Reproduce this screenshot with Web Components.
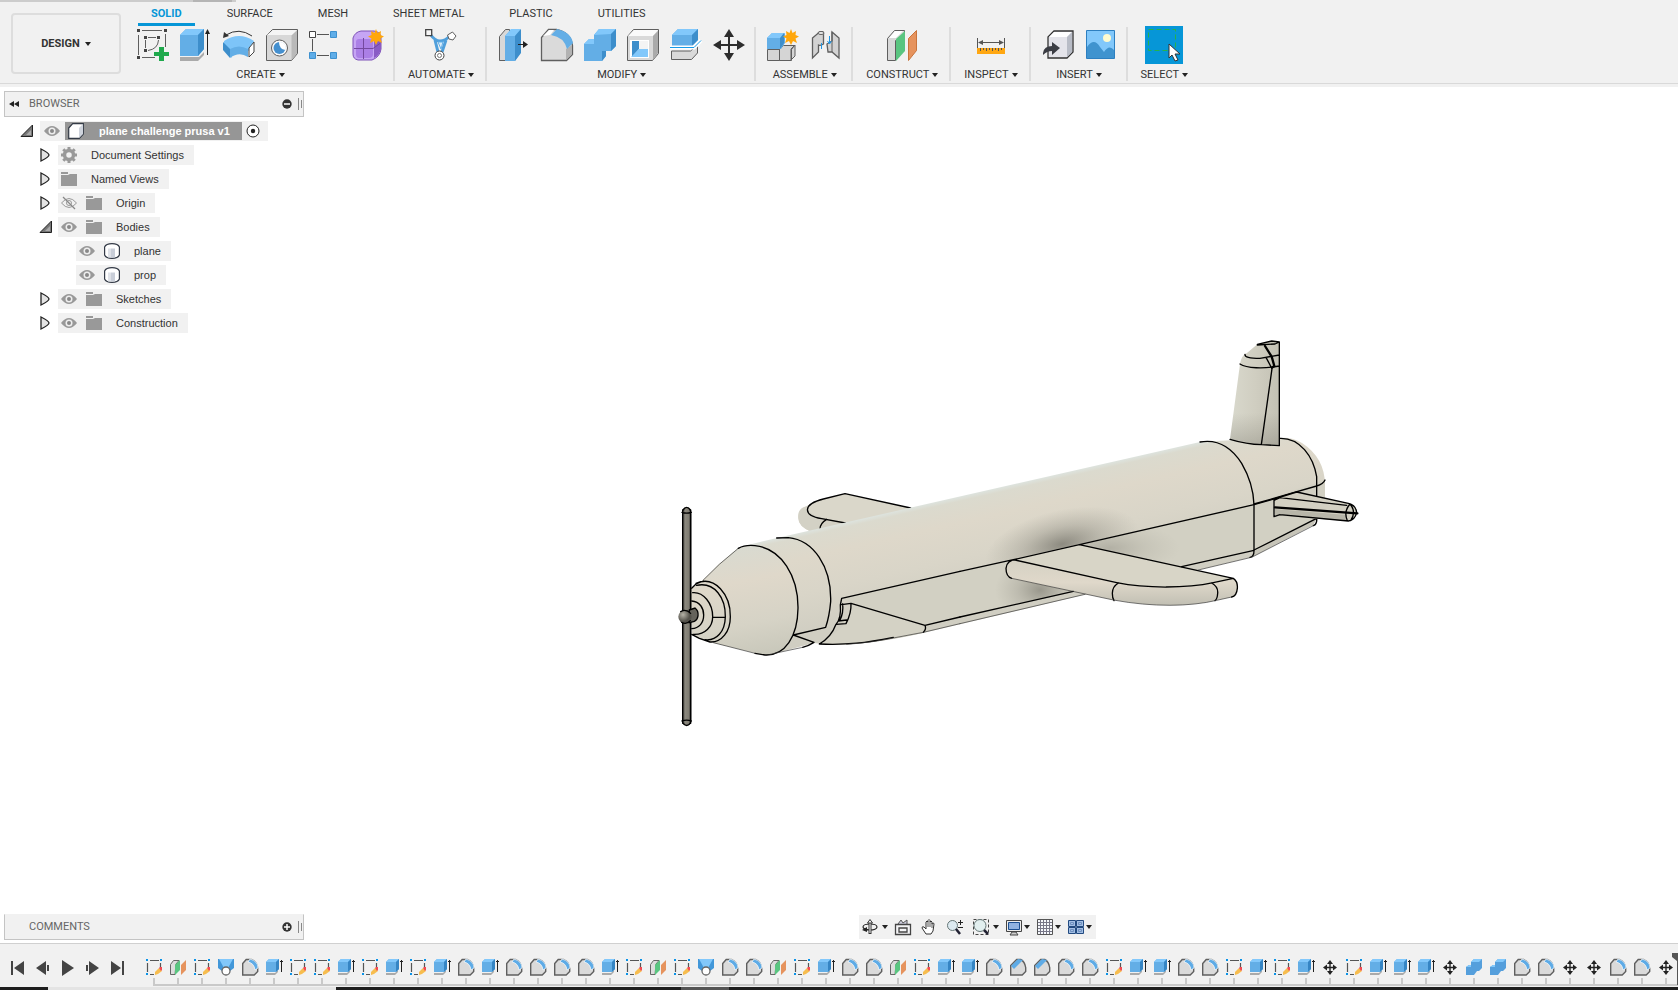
<!DOCTYPE html>
<html lang="en">
<head>
<meta charset="utf-8">
<title>plane challenge prusa v1</title>
<style>
html,body{margin:0;height:100%}
body{font:11px/16px Roboto,"Liberation Sans",sans-serif;color:#333;background:#fff;overflow:hidden}
</style>
</head>
<body>
<cad-app></cad-app>
<script>
const BASE = `*{box-sizing:border-box}button{font:inherit;color:inherit;background:none;border:0;padding:0;margin:0;display:flex;align-items:center;justify-content:center}svg{display:block}`;
const define = (name, render) => customElements.define(name, class extends HTMLElement {
  connectedCallback() {
    if (this.shadowRoot) return;
    const t = document.createElement('template');
    t.innerHTML = `<style>${BASE}</style>` + render(this);
    this.attachShadow({mode: 'open'}).append(t.content.cloneNode(true));
  }
});

/* Icon artwork: [width, height, markup] */
const G = '#5f5f5f';
const ICONS = {
  sketch: [32,32,`<path d="M1.500 6v20M5 1.500h20M28.500 5v13M5 28.500h13" stroke="${G}" fill="none"/><g fill="#444"><path d="M0 0h3v3H0zM27 0h3v3h-3zM0 27h3v3H0zM7 7h3v3H7zM20 7h3v3h-3zM7 20h3v3H7z"/></g><path d="M11 8.500h8M8.500 11v8M21.500 11Q21 20 11 21.500" stroke="${G}" fill="none"/><path d="M22 18h5v5h5v4h-5v5h-5v-5h-5v-4h5z" fill="#1fa94c"/>`],
  extrude: [32,32,`<path d="M0 28h19l5-5v3l-6 6H0z" fill="#aaa"/><path d="M0 6l6-6h18v20l-6 7H0z" fill="#63aee6"/><path d="M0 6l6-6h18l-6 6z" fill="#82c8fb"/><path d="M18 6l6-6v20l-6 7z" fill="#3d8ecb"/><path d="M27.500 4v22" stroke="#222"/><path d="M25 5l2.500-5L30 5z" fill="#222"/>`],
  revolve: [32,32,`<path d="M1 12Q16 2 31 12l-5 10q-9-5-18 0l1 7-8-8z" fill="#7dc4f8"/><path d="M0 13l7 7v9l-7-8z" fill="#3d8ecb"/><path d="M7 20q9-5 18 0v8q-9-6-18 1z" fill="#63aee6"/><path d="M26 19l5-6v10l-5 5z" fill="#fff" stroke="#444"/><path d="M3 6Q16-2 29 7" fill="none" stroke="#333"/><path d="M0 9l1-6 5 4z" fill="#333"/>`],
  hole: [32,32,`<path d="M.500 6.500l6-6h25v24l-6 7H.500z" fill="#d8d8d8" stroke="${G}"/><path d="M1 6l6-5h24l-5 5z" fill="#f5f5f5"/><path d="M25.500 6.500l5.500-5v23l-5.500 6.500z" fill="#b9b9b9"/><circle cx="13.500" cy="19" r="8" fill="#fafafa" stroke="${G}"/><circle cx="13.500" cy="19" r="6" fill="#4590cf"/><path d="M13 13q0 7 6.500 8a6 6 0 0 0-6.500-8z" fill="#fff"/>`],
  pattern: [32,32,`<path d="M8 5.500h12M3.500 10v12M8 26.500h12" stroke="#555"/><path d="M.500 2.500h6v6h-6z" fill="#fff" stroke="#444"/><path d="M21.500 2.500h6v6h-6zM.500 23.500h6v6h-6zM21.500 23.500h6v6h-6z" fill="#5fadE8" stroke="#3e91cf"/>`],
  form: [32,32,`<path d="M1 9q2-6 8-7h13q7 1 7 7v11q-1 8-9 11H6q-5-1-5-6z" fill="#c6a5f4" stroke="#7f53b8"/><path d="M22 10l7-4v14q-2 7-7 9z" fill="#8a5cc5"/><path d="M4 13q0-3 3-3h10q4 0 4 3v12q0 4-4 4H7q-3 0-3-4z" fill="#ab7fe6"/><path d="M11.500 9v21M2 19.500h19l7-5" stroke="#74499f" fill="none"/><path d="M24 0l1.500 4L29 2l-.500 4L32 7.500 28.500 9.500 30 14l-4-2-2 4-2-4-4 2 1.500-4.500L16 7.500 19.500 6 19 2l3.500 2z" fill="#ffa70c"/>`],
  automate: [32,32,`<path d="M5 5q5 7 10 7t10-5M10 11l3 12M21 11l-4 12" stroke="#4f9fdb" stroke-width="3" fill="none"/><path d="M13 13h5l-2 7z" fill="#d7ecfb" stroke="#5fadE8"/><path d="M.700.700h6v6h-6z" fill="#f6f6f6" stroke="#444" stroke-width="1.300"/><path d="M22.500 6l5-3 3.500 4-3 4-4-1z" fill="#fff" stroke="${G}"/><circle cx="14.500" cy="26.500" r="4.500" fill="#fff" stroke="#444"/><circle cx="14.500" cy="26.500" r="2" fill="none" stroke="#777"/>`],
  presspull: [32,32,`<path d="M1.500 7.500l6-7h4v31h-10z" fill="#d8d8d8" stroke="${G}"/><path d="M7 7l6-6.500h9v24L17 32H7z" fill="#63aee6"/><path d="M7 7l6-7h10l-6 7z" fill="#82c8fb"/><path d="M17 7l6-7v24l-6 8z" fill="#3d8ecb"/><path d="M20 15.500h7" stroke="#222"/><path d="M25 12l5 3.500-5 3.500z" fill="#222"/>`],
  fillet: [32,32,`<path d="M.500 8.500l7-8h8q14 3 16 16v9l-6 6H.500z" fill="#dadada" stroke="${G}" stroke-width="1.300"/><path d="M2 7l6-6h5L9 6z" fill="#fff"/><path d="M25 20l6-4v9l-6 6z" fill="#b2b2b2"/><path d="M10 6l6-6q14 3 16 14l-6 6Q23 8 10 6z" fill="#63aee6"/>`],
  combine: [32,32,`<path d="M10 6l5-6h17v17l-5 5h-5v5l-4 5H0V15l5-5h5z" fill="#63aee6"/><path d="M10 6l5-6h17l-5 5z" fill="#82c8fb"/><path d="M0 15l5-5h5v5z" fill="#82c8fb"/><path d="M27 5l5-5v17l-5 5zM18 22h4v5l-4 5z" fill="#3d8ecb"/>`],
  shell: [32,32,`<path d="M.500 7.500l6-7h25v24l-6 7H.500z" fill="#d9d9d9" stroke="${G}"/><path d="M1 7l6-6h24l-5 6z" fill="#fafafa"/><path d="M26 7l5-5v22l-5 7z" fill="#aaa"/><path d="M3 11h19v18H3z" fill="#fff"/><path d="M5 12h7v8l-7 8z" fill="#3d8ecb"/><path d="M4 28l8-8h9v8z" fill="#82c8fb"/><path d="M12 12h9v8h-9z" fill="#f4f4f4"/>`],
  split: [32,32,`<path d="M1.500 22h19l7-6v8l-6 6.500h-20z" fill="#d9d9d9" stroke="${G}"/><path d="M2 6l6-6h20v11l-6 6H2z" fill="#63aee6"/><path d="M2 6l6-6h20l-6 6z" fill="#82c8fb"/><path d="M22 6l6-6v11l-6 6z" fill="#3d8ecb"/><path d="M0 18.500h24l7-7" stroke="#fff" stroke-width="4" fill="none"/><path d="M0 18.500h24l7-7" stroke="#189be8" fill="none"/>`],
  move: [32,32,`<path d="M16 5v22M5 16h22" stroke="#2d2d2d" stroke-width="2"/><path d="M16 0l5 8H11zM16 32l-5-8h10zM0 16l8-5v10zM32 16l-8 5V11z" fill="#2d2d2d"/>`],
  component: [32,32,`<path d="M.500 20.500h12v11H.500zM12.500 20.500l4-4h11l-3 4v11h-12zM24 20l4-4v11l-4 4z" fill="#d5d5d5" stroke="${G}"/><path d="M0 9l5-5h13v10l-4 6H0z" fill="#63aee6"/><path d="M0 9l5-5h13l-4 5z" fill="#82c8fb"/><path d="M13 9l4-5v10l-4 6z" fill="#3d8ecb"/><path d="M24 0l1.500 4L29 2l-.500 4L32 7.500 28.500 9.500 30 14l-4-2-2 4-2-4-4 2 1.500-4.500L16 7.500 19.500 6 19 2l3.500 2z" fill="#ffa70c"/>`],
  joint: [32,32,`<path d="M2.500 9l7-6q4-1 4 1v11q-3 2-5 1v7l-6 6z" fill="#d3d3d3" stroke="${G}" stroke-width="1.300"/><ellipse cx="11" cy="4" rx="3" ry="1.500" fill="#eee" stroke="${G}"/><path d="M17 15l5-3V3l7 6v20l-7-6h-4z" fill="#d3d3d3" stroke="${G}" stroke-width="1.300"/><path d="M22 3v20" stroke="${G}"/><path d="M11.500 14v6M19.500 7v7m-2-2l2 3 2-3" stroke="#2196e4" fill="none"/>`],
  construct: [32,32,`<path d="M1.500 9.500l7-8h10v3l-9 7v20h-8z" fill="#d8d8d8" stroke="${G}"/><path d="M3 9l6-7h8l-7 7z" fill="#fff"/><path d="M10 10l9-8v20l-9 10z" fill="#59c580"/><path d="M22.500 9.500l8-8v20l-8 10z" fill="#e6935d" stroke="#c9743c"/>`],
  inspect: [32,32,`<path d="M2.500 9v13M29.500 9v13M5 13.500h22" stroke="#555"/><path d="M3 13.500l5-2.500v5zM29 13.500l-5-2.500v5z" fill="#555"/><path d="M2 19h28v6H2z" fill="#ffa712"/><path d="M5.500 19v3m3-3v2m3-2v3m3-3v2m3-2v3m3-3v2m3-2v3m3-3v2" stroke="#555"/>`],
  insert: [32,32,`<path d="M6 8l6-6h19v21l-6 6H6z" fill="#e4e4ea" stroke="#333" stroke-width="1.300"/><path d="M7 8l5-5h18l-5 5z" fill="#fff"/><path d="M25 8l5-5v20l-5 5z" fill="#b8bcc6"/><path d="M1 24q1-7 9-7v-4l8 6-8 7v-4q-5 0-9 4z" fill="#3b3d44"/>`],
  image: [32,32,`<path d="M1.500 1.500h28v28h-28z" fill="#82c8fb" stroke="#2d7fc0"/><path d="M2 18q7-10 13 0l4 5q5-8 10-2v8H2z" fill="#3f93cf"/><circle cx="22" cy="9" r="4" fill="#fffbd0"/>`],
  select: [38,38,`<path d="M0 0h38v38H0z" fill="#0696d7"/><path d="M3.500 3.500h27v21h-27z" fill="none" stroke="#25b34b" stroke-dasharray="5 3"/><path d="M24 18v14l3-3 3 6 3-1-3-6h5z" fill="#fff" stroke="#333"/>`],
  'tl-sketch': [16,17,`<path d="M4 1.500h9M1.500 4v9M14.500 4v5M4 15.500h4" stroke="#555" stroke-width="1.200"/><path d="M0 0h2v2H0zM14 0h2v2h-2zM0 14h2v2H0z" fill="#0a93e8"/><path d="M9 13l4-4 3 3-4 3-3 1z" fill="#f7bd4f"/><path d="M13 9l1-1h2v3l-1 1z" fill="#f34a52"/>`],
  'tl-construct': [16,17,`<path d="M.500 15.500V5.500l3-4H9L6 5l-1 10.500z" fill="#ddd" stroke="#666"/><path d="M5 6l5-5v10l-5 5z" fill="#59c580"/><path d="M11 6l5-5v10l-5 5z" fill="#e6935d"/>`],
  'tl-loft': [16,17,`<path d="M0 0h16v9l-4 3L8 8l-4 4-4-3z" fill="#4297d9"/><path d="M1 0h14l-5 9H6z" fill="#82c8fb"/><circle cx="8" cy="12" r="4" fill="#fff" stroke="#666" stroke-width="1.300"/>`],
  'tl-fillet': [16,17,`<path d="M.700 4.500l3.500-4h5q6 2 6.500 9v3l-3.500 3.500H.700z" fill="#dadada" stroke="${G}" stroke-width="1.400"/><path d="M6 3l2-3q8 2 8 9l-3 2Q12 4 6 3z" fill="#5eabe6" stroke="#fff" stroke-width=".700"/>`],
  'tl-chamfer': [16,17,`<path d="M.700 6.500l6-6h4q4 2 5 8v4l-3.500 3.500H.700z" fill="#dadada" stroke="${G}" stroke-width="1.400"/><path d="M1 7l7-7 5 1-9 9z" fill="#5eabe6"/>`],
  'tl-extrude': [16,17,`<path d="M0 14h9l3-3v2l-3 3H0z" fill="#aaa"/><path d="M0 3l3-3h10v10l-3 3H0z" fill="#63aee6"/><path d="M0 3l3-3h10l-3 3z" fill="#82c8fb"/><path d="M10 3l3-3v10l-3 3z" fill="#3585c4"/><path d="M15.500 1v12M14 2.500h3" stroke="#222"/>`],
  'tl-move': [16,17,`<path d="M8 3v11M3 8.500h10" stroke="#222" stroke-width="1.400"/><path d="M8 1l3 4H5zM8 16l-3-4h6zM1 8.500l4-3v6zM15 8.500l-4 3v-6z" fill="#222"/>`],
  'tl-combine': [16,17,`<path d="M5 3l3-3h8v9l-3 3h-2l-3 4H0V8l3-2h2z" fill="#559fdc"/><path d="M5 3l3-3h8l-3 3zM0 8l3-2h2v2z" fill="#82c8fb"/>`],
  orbit: [16,16,`<ellipse cx="8" cy="8" rx="7" ry="3" fill="none" stroke="#222" stroke-width="1.200"/><path d="M8 3v12" stroke="#333" stroke-width="3"/><path d="M8 3v11" stroke="#fff"/><path d="M5.500 4L8 .500 10.500 4z" fill="#fff" stroke="#333"/><path d="M0 11l5-3v5z" fill="#222"/>`],
  lookat: [16,16,`<path d="M3 5l3-4 2 3 4-3v4" fill="#ccd" stroke="#555"/><path d="M.500 5.500h15v10H.500zM4 9h8v4H4z" fill="#f4f4f6" stroke="#444" stroke-width="1.300"/>`],
  hand: [16,16,`<path d="M5 15L1 9q0-2 2-1l2 2V3q1-2 2 0V1.500q1-2 2 0V3q1-2 2 0v2q2-2 2 0l-1 7-2 3z" fill="#fff" stroke="#333"/><path d="M7 3v5M9 3v5M11 4v5" stroke="#555"/>`],
  zoom: [16,16,`<circle cx="5.500" cy="6.500" r="5" fill="#dce9f0" stroke="#677"/><path d="M9 10l4 5" stroke="#223" stroke-width="2.500"/><path d="M11 3.500h5M13.500 1v5M11 8.500h5" stroke="#222"/>`],
  fit: [16,16,`<path d="M.500.500h15v15H.500z" fill="none" stroke="#444" stroke-dasharray="3 2"/><circle cx="7" cy="6.500" r="6" fill="#e2efef" stroke="#677"/><path d="M11 11l4 4" stroke="#223" stroke-width="2.500"/>`],
  display: [16,16,`<path d="M.500 1.500h15v11H.500z" fill="#eee" stroke="#444"/><path d="M2.500 3.500h11v7h-11z" fill="#90b2e0" stroke="#1c4f91"/><path d="M6 13h4l2 3H4z" fill="#ccc" stroke="#444"/>`],
  grid: [16,16,`<path d="M.500.500h15v15H.500z" fill="#f6f8fb" stroke="#555"/><path d="M3.500 1v14m3-14v14m3-14v14m3-14v14M1 3.500h14m-14 3h14m-14 3h14m-14 3h14" stroke="#778"/>`],
  views: [16,16,`<path d="M.500 1.500h7v6h-7zM8.500 1.500h7v6h-7zM.500 8.500h7v6h-7zM8.500 8.500h7v6h-7z" fill="#a3bfe4" stroke="#224a80"/><path d="M2.500 3.500h3v2h-3zM10.500 3.500h3v2h-3zM2.500 10.500h3v2h-3zM10.500 10.500h3v2h-3z" fill="none" stroke="#6f90bf"/>`],
  eye: [16,12,`<path d="M0 6Q8-4 16 6 8 16 0 6z" fill="#999"/><circle cx="8" cy="6" r="3.500" fill="#eee"/><circle cx="8" cy="6" r="2" fill="#888"/>`],
  'eye-off': [16,12,`<path d="M.500 6Q8-3 15.500 6 8 15 .500 6z" fill="none" stroke="#999"/><circle cx="8" cy="6" r="2.500" fill="none" stroke="#999"/><path d="M2 0l12 12" stroke="#888" stroke-width="1.300"/>`],
  folder: [16,14,`<path d="M0 0h7v2H0zM0 3h7l2-1h7v12H0z" fill="#999"/>`],
  gear: [16,16,`<circle cx="8" cy="8" r="4.500" fill="none" stroke="#999" stroke-width="3.500"/><path d="M8 0v3m0 10v3M0 8h3m10 0h3M2.300 2.300l2.200 2.200m7 7l2.200 2.200m0-11.400l-2.200 2.200m-7 7l-2.200 2.200" stroke="#999" stroke-width="3"/>`],
  cube: [16,16,`<path d="M.700 5l4-4.300H15.300V11l-4 4.300H.700z" fill="#fff" stroke="#333a46" stroke-width="1.200"/><path d="M11 5l4-4v10l-4 4z" fill="#cfd4dd"/>`],
  body: [16,16,`<path d="M.600 4Q2 .600 8 .600T15.400 4v8q-1.400 3.400-7.400 3.400T.600 12z" fill="#fff" stroke="#333a46" stroke-width="1.200"/><path d="M4 5.500h3v9H4z" fill="#dfe2e8"/><path d="M7 5.500h4v9H7z" fill="#c9ced8"/>`],
  closed: [10,14,`<path d="M1 1q8 4 8 6t-8 6z" fill="#e3e3e3" stroke="#222" stroke-width="1.300"/>`],
  open: [12,12,`<path d="M11.500 0v11.500H0z" fill="#777" stroke="#222"/><path d="M10 5v5H5z" fill="#aaa"/>`],
  target: [14,14,`<circle cx="7" cy="7" r="6" fill="#fff" stroke="#222"/><circle cx="7" cy="7" r="2.200" fill="#222"/>`],
  rewind: [10,6,`<path d="M5 0v6L0 3zM10 0v6L5 3z" fill="#222"/>`],
  minus: [10,10,`<circle cx="5" cy="5" r="4.700" fill="#333"/><path d="M2 5h6" stroke="#fff" stroke-width="1.500"/>`],
  plus: [10,10,`<circle cx="5" cy="5" r="4.700" fill="#333"/><path d="M2 5h6M5 2v6" stroke="#fff" stroke-width="1.500"/>`],
  grip: [4,12,`<path d="M.500 0v12" stroke="#888"/><path d="M3.500 2v8" stroke="#888"/>`],
  first: [13,14,`<path d="M0 0h2v14H0zM13 0v14L3 7z" fill="#444"/>`],
  prev: [13,14,`<path d="M10 0v14L0 7zM11 4h2v6h-2z" fill="#444"/>`],
  play: [13,16,`<path d="M1 0l12 8L1 16z" fill="#444"/>`],
  next: [13,14,`<path d="M3 0v14l10-7zM0 4h2v6H0z" fill="#444"/>`],
  last: [13,14,`<path d="M11 0h2v14h-2zM0 0v14l10-7z" fill="#444"/>`],
};
define('cad-icon', el => {
  const [w, h, art] = ICONS[el.getAttribute('name')];
  return `<style>:host{display:block;flex:none}</style><svg width="${w}" height="${h}" viewBox="0 0 ${w} ${h}" overflow="visible" aria-hidden="true">${art}</svg>`;
});
define('cad-caret', () => `<style>:host{display:block;flex:none;border:3px solid transparent;border-top:4px solid #222;border-bottom:0}</style>`);

define('tool-group', el => {
  const label = el.getAttribute('label');
  const icons = el.getAttribute('icons').split(' ');
  return `<style>
  :host{display:flex;flex-direction:column;align-items:center}
  :host(:not([last])){border-right:2px solid transparent;border-image:linear-gradient(transparent 2px,#ddd 2px,#ddd 54px,transparent 54px) 1}
  .icons{display:flex;align-items:center;gap:11px;height:38px;padding:0 9px 0 11px}
  .label{gap:3px;height:19px;padding:2px 11px 0 13px;white-space:nowrap}
  </style><div class="icons">${icons.map(i => `<button aria-label="${i}"><cad-icon name="${i}"></cad-icon></button>`).join('')}</div>
  <button class="label"><span>${label}</span><cad-caret></cad-caret></button>`;
});

define('ribbon-bar', () => `<style>
  :host{display:block;background:#f1f1f1;padding-bottom:3px}
  .strip{height:2px;width:236px;background:linear-gradient(90deg,#ccc 193px,#b5b5b5 193px 232px,#ccc 232px)}
  .bar{display:flex;border-bottom:1px solid #d9d9d9}
  .mode{width:110px;height:61px;margin:11px 5px 0 11px;border:2px solid #ddd;border-radius:4px;gap:5px;font-weight:700}
  .tabs{display:flex;gap:19px;padding-left:12px;height:24px}
  .tabs button{height:24px;padding:3px 13px 0;border-bottom:3px solid transparent;white-space:nowrap}
  .tabs button:first-child{border-color:#0696d7;color:#0696d7;font-weight:700}
  .groups{display:flex}
  </style><div class="strip"></div><div class="bar">
  <button class="mode">DESIGN <cad-caret></cad-caret></button>
  <div><nav class="tabs"><button>SOLID</button><button>SURFACE</button><button>MESH</button><button>SHEET METAL</button><button>PLASTIC</button><button>UTILITIES</button></nav>
  <div class="groups">
   <tool-group label="CREATE" icons="sketch extrude revolve hole pattern form"></tool-group>
   <tool-group label="AUTOMATE" icons="automate"></tool-group>
   <tool-group label="MODIFY" icons="presspull fillet combine shell split move"></tool-group>
   <tool-group label="ASSEMBLE" icons="component joint"></tool-group>
   <tool-group label="CONSTRUCT" icons="construct"></tool-group>
   <tool-group label="INSPECT" icons="inspect"></tool-group>
   <tool-group label="INSERT" icons="insert image"></tool-group>
   <tool-group label="SELECT" icons="select" last></tool-group>
  </div></div></div>`);

define('panel-bar', el => `<style>
  :host{display:flex;align-items:center;height:26px;background:#f1f1f1;border:1px solid #c4c4c4;color:#666;padding:0 1px 0 4px}
  :host([docked]){border-top-color:#f1f1f1}
  .lead{width:20px;display:flex}
  .title{flex:1}
  .grip{margin-left:6px}
  </style><div class="lead">${el.hasAttribute('docked') ? '' : '<button aria-label="Collapse"><cad-icon name="rewind"></cad-icon></button>'}</div>
  <div class="title"><slot></slot></div><button aria-label="Toggle"><cad-icon name="${el.hasAttribute('docked') ? 'plus' : 'minus'}"></cad-icon></button><cad-icon class="grip" name="grip"></cad-icon>`);

define('tree-row', el => {
  const level = +el.getAttribute('level'), arrow = el.getAttribute('arrow');
  const icons = el.getAttribute('icons').split(' ');
  return `<style>
  :host{display:flex;align-items:center;height:20px;margin-bottom:4px;padding-left:${[17, 36, 54][level]}px;font-family:"Liberation Sans",Arial,sans-serif}
  .arrow{width:${level ? 18 : 19}px;height:20px;display:flex;align-items:center}
  .chip{display:flex;align-items:center;height:20px;background:#f1f1f1;padding:0 10px 0 3px}
  .icons{display:flex;align-items:center;gap:9px;margin-right:14px}
  :host([root]) .chip{padding:0 8px 0 4px}
  .name{display:flex;align-items:center;height:18px;background:#969696;color:#fff;font-weight:700;padding:0 12px 0 3px;gap:15px;margin:0 4px 0 5px}
  </style><div class="arrow">${arrow ? `<button aria-label="Expand"><cad-icon name="${arrow}"></cad-icon></button>` : ''}</div>` +
  (el.hasAttribute('root')
    ? `<div class="chip"><cad-icon name="eye"></cad-icon><div class="name"><cad-icon name="cube"></cad-icon><span><slot></slot></span></div><cad-icon name="target"></cad-icon></div>`
    : `<div class="chip"><div class="icons">${icons.map(i => `<cad-icon name="${i}"></cad-icon>`).join('')}</div><span><slot></slot></span></div>`);
});

define('browser-panel', () => `<style>:host{display:block}.rows{padding-top:4px}</style>
  <panel-bar>BROWSER</panel-bar><div class="rows">
  <tree-row root level="0" arrow="open" icons="eye">plane challenge prusa v1</tree-row>
  <tree-row level="1" arrow="closed" icons="gear">Document Settings</tree-row>
  <tree-row level="1" arrow="closed" icons="folder">Named Views</tree-row>
  <tree-row level="1" arrow="closed" icons="eye-off folder">Origin</tree-row>
  <tree-row level="1" arrow="open" icons="eye folder">Bodies</tree-row>
  <tree-row level="2" icons="eye body">plane</tree-row>
  <tree-row level="2" icons="eye body">prop</tree-row>
  <tree-row level="1" arrow="closed" icons="eye folder">Sketches</tree-row>
  <tree-row level="1" arrow="closed" icons="eye folder">Construction</tree-row></div>`);

define('view-bar', () => `<style>:host{display:flex;align-items:center;gap:10px;height:24px;padding:0 4px 0 3px;background:#f1f1f1}
  .menu{gap:2px}.menu.wide{gap:4px}.menu+button{margin-left:-3px}</style>` +
  [['orbit','menu wide'],['lookat'],['hand'],['zoom'],['fit','menu wide'],['display','menu'],['grid','menu'],['views','menu']].map(([n, c]) => `<button class="${c || ''}" aria-label="${n}"><cad-icon name="${n}"></cad-icon>${c ? '<cad-caret></cad-caret>' : ''}</button>`).join(''));

define('plane-model', () => `<style>
  :host{display:block;min-height:0;min-width:0}
  svg{width:100%;height:100%}
  .l{fill:none;stroke:#000;stroke-width:4;stroke-linejoin:round;stroke-linecap:round}
  .t{stroke-width:2;stroke:#333}
  </style><svg viewBox="0 87 1678 856" role="img" aria-label="Plane model">
  <defs>
  <linearGradient id="hull" gradientUnits="userSpaceOnUse" x1="1000" y1="488" x2="1022" y2="585"><stop offset="0" stop-color="#dde2dc"/><stop offset=".04" stop-color="#dbdace"/><stop offset=".25" stop-color="#ded8ca"/><stop offset=".6" stop-color="#d9d5c8"/><stop offset="1" stop-color="#d0cec2"/></linearGradient>
  <linearGradient id="cone" gradientUnits="userSpaceOnUse" x1="735" y1="550" x2="755" y2="655"><stop offset="0" stop-color="#d9dad0"/><stop offset=".3" stop-color="#dfd8ca"/><stop offset=".7" stop-color="#d6d3c6"/><stop offset="1" stop-color="#c9c8bb"/></linearGradient>
  <linearGradient id="fin" x1="0" x2="1"><stop offset="0" stop-color="#d9d9cd"/><stop offset=".5" stop-color="#d0cec1"/><stop offset="1" stop-color="#c3c1b4"/></linearGradient>
  <linearGradient id="finshade" x1="0" x2="0" y1="0" y2="1"><stop offset=".6" stop-color="#77756b" stop-opacity="0"/><stop offset="1" stop-color="#77756b" stop-opacity=".35"/></linearGradient>
  <linearGradient id="tube" x1="0" x2="0" y1="0" y2="1"><stop offset="0" stop-color="#d5d1c3"/><stop offset=".5" stop-color="#dfd8ca"/><stop offset="1" stop-color="#c1bfb3"/></linearGradient>
  <linearGradient id="rod" x1="0" x2="1"><stop offset="0" stop-color="#33322f"/><stop offset=".35" stop-color="#8b887e"/><stop offset=".7" stop-color="#817e74"/><stop offset="1" stop-color="#2b2a28"/></linearGradient>
  <radialGradient id="sh"><stop offset="0" stop-color="#6d6b62" stop-opacity=".7"/><stop offset=".5" stop-color="#7d7b71" stop-opacity=".3"/><stop offset="1" stop-color="#8d8b80" stop-opacity="0"/></radialGradient>
  <radialGradient id="ball" cx=".35" cy=".35"><stop offset="0" stop-color="#b5b2a7"/><stop offset="1" stop-color="#55534c"/></radialGradient>
  <clipPath id="upper"><path d="M777 538L1201 442L1260 440L1253 505L840 598z"/></clipPath>
  <clipPath id="lower"><path d="M840 599L1254 505L1254 551L923 626z"/></clipPath>
  </defs>
  <g transform="translate(660 480) scale(.333333)"><path d="M415 115C412 88 445 72 490 57L555 41L760 86L700 150L455 156Q415 140 415 115z" fill="#dad7ca"/><path d="M415 115C412 90 425 80 445 78C435 100 470 112 556 129L540 145L455 156Q415 140 415 115z" fill="#d3d1c5"/>
   <path class="l" d="M490 57L555 41L752 84M490 57C430 72 425 105 485 116L556 129M500 118Q480 130 480 147"/></g>
  <path fill="url(#hull)" d="M691 588L702 581L719 564L738 548L752 544L777 538L1200 442L1215 441L1280 438Q1292 437 1302 443Q1325 458 1325 485V500L1316 520L1313 525L1252 557L1198 570L1083 595L923 633Q870 645 830 645L814 643L780 652L768 655L755 653L710 642L692 635z"/>
  <path fill="url(#cone)" d="M691 588L702 581L738 548Q752 542 766 549C788 560 798 585 798 608C797 637 784 657 764 655L710 642L692 635z"/>
  <path d="M841 598L1254 504L1325 480V497L1316 520L1254 550L923 626L851 603z" fill="#d2d0c3"/>
  <path d="M851 603L923 625Q928 630 923 633Q870 645 820 644Q838 632 846 622z" fill="#d4d2c5"/>
  <g clip-path="url(#upper)"><ellipse cx="1062" cy="544" rx="78" ry="34" transform="rotate(-13 1062 544)" fill="url(#sh)"/></g>
  <g clip-path="url(#lower)"><ellipse cx="1110" cy="548" rx="70" ry="26" fill="url(#sh)" opacity=".45"/><ellipse cx="1040" cy="590" rx="45" ry="32" fill="url(#sh)" opacity=".8"/></g>
  <path d="M1254 551L1316 519L1313 525L1250 558z" fill="#c7c5b9"/>
  <g transform="translate(660 480) scale(.333333)">
   <path class="l" d="M235 205Q255 194 285 197C365 205 415 290 414 385C413 470 375 528 315 525L285 520M350 174L385 173C460 180 515 260 512 365Q508 410 497 442L400 465L462 487Q445 498 428 502"/>
   <path class="l t" d="M235 205L178 253L130 300"/>
   <path class="l" d="M108 310C165 285 212 345 211 410C211 455 185 488 150 486M110 316C165 305 197 355 196 410C195 455 170 483 135 479M98 338C130 335 158 370 158 410C158 440 135 465 100 463M95 363C120 365 131 385 131 405C131 428 118 445 95 446M95 325L108 312L130 303M95 463L118 475L150 486M158 412H196"/>
   <path class="l" d="M900 274L545 355L541 375C543 400 540 420 528 433L558 431C568 412 574 390 573 370L545 374M528 433C518 460 500 480 478 492M535 423L560 420M548 372C550 390 545 410 540 420M573 370L795 436L900 411M795 436Q800 448 790 457M478 492C560 496 620 488 700 472"/>
   <path class="l t" d="M160 488L285 520M330 523L428 502M560 493Q640 487 700 474L790 457L900 431"/>
   <rect x="66" y="82" width="28" height="655" rx="13" fill="url(#rod)"/><path class="l" d="M68 90V730M92 90V730M66 97Q80 102 94 97M66 723Q80 718 94 723M68 92Q80 72 92 92M68 728Q80 745 92 728"/>
   <path d="M88 390L105 384Q116 392 114 408Q112 420 103 424L88 428z" fill="#65635b" stroke="#000" stroke-width="4"/><circle cx="75" cy="410" r="20" fill="url(#ball)"/><path class="l" d="M62 395Q78 385 92 400M65 427Q80 435 91 422"/>
  </g>
  <g transform="translate(960 420) scale(.333333)">
   <path fill="#d8d5c7" d="M160 419L358 374L820 475L760 488C680 505 560 506 470 488z"/>
   <path fill="url(#tube)" d="M160 419L470 488C560 506 680 505 760 488L820 475Q833 485 832 505Q831 525 820 530L770 541C690 560 580 562 460 540L150 475Q138 465 138 445Q140 422 160 419z"/>
   <path class="l" d="M0 454L160 419L358 374L882 254L960 232M358 374L820 475Q834 485 832 505Q830 528 815 531M160 419L470 488C560 506 680 505 760 488L820 475M170 419Q140 420 138 445Q138 470 155 475M475 489Q457 500 457 520Q457 535 462 542M755 489Q775 500 773 520Q772 538 765 542"/>
   <path class="l" d="M720 66C765 58 810 75 845 130Q880 190 882 254V392Q882 410 870 412M665 440L882 391M0 591L340 514"/>
   <path class="l t" d="M715 450L870 413M0 611L375 523M155 475L460 540C580 562 690 560 770 541L815 531"/>
  </g>
  <g transform="translate(1180 320) scale(.333333)">
   <path fill="url(#fin)" d="M180 132Q185 105 200 100L232 73L275 63L298 66V377L245 374L150 358z"/><path fill="url(#finshade)" d="M180 132H298V377L245 374L150 358z"/>
   <path class="l" d="M150 358Q200 373 245 374L298 377V66L275 63L232 73M195 103Q193 115 240 115L298 105M180 132C200 145 250 147 298 138M276 146L244 374M232 75L285 72L298 66M258 112L276 146M298 355C360 352 400 410 410 470V528M222 552L410 498Q430 492 435 480M222 690L410 595Q412 612 400 617"/>
   <path class="l" d="M255 78L275 110L283 138L276 143" style="stroke-width:7"/>
   <path class="l t" d="M215 712L400 617"/>
   <path fill="#d3d0c2" d="M282 537L350 516L505 550Q528 555 530 578Q525 600 505 603L282 586z"/><path fill="#b8b6a9" d="M285 567L500 585V603L285 586z"/>
   <path class="l" d="M350 516L505 550Q528 555 530 578Q525 600 505 603L300 584M285 540L300 533L500 556M282 537V590L300 584M510 552Q490 575 502 602M510 552Q530 575 512 602M282 537L350 516"/>
   <path class="l" d="M285 562L532 580" style="stroke-width:7"/>
  </g></svg>`);

const STEPS = 's c s l f e s s e s e s e f e f f f f e s c s l f f c s e f f c s e e f h h f f s e e f f s e s e m s e e e m b b f f m m f f m'.split(' ');
const KIND = {s:'sketch', c:'construct', l:'loft', f:'fillet', e:'extrude', h:'chamfer', m:'move', b:'combine'};
define('time-line', () => `<style>
  :host{display:flex;height:44px;background:#f1f1f1;border-top:1px solid #d0d0d0;position:relative;overflow:hidden}
  .play{display:flex;gap:12px;padding:0 18px 0 11px;height:48px;align-items:center}
  ol{display:flex;list-style:none;margin:0;padding:0;flex:none}
  li{width:24px;height:42px;padding:15px 4px 0;border-bottom:2px solid #c9c9c9;background:linear-gradient(#c9c9c9,#c9c9c9) 11px 34px/2px 6px no-repeat}
  li:first-child{border-image:linear-gradient(90deg,transparent 11px,#c9c9c9 11px) 2}
  .mark{position:absolute;right:0;top:9px}
  </style><div class="play">${['first','prev','play','next','last'].map(n => `<button aria-label="${n}"><cad-icon name="${n}"></cad-icon></button>`).join('')}</div>
  <ol>${STEPS.map(s => `<li><cad-icon name="tl-${KIND[s]}"></cad-icon></li>`).join('')}</ol>
  <svg class="mark" width="6" height="32"><path d="M0 0h6v32H5V8L0 4z" fill="#555"/></svg>`);

define('cad-app', () => `<style>
  :host{display:flex;flex-direction:column;height:100vh}
  main{flex:1;min-height:0;display:grid;grid-template:auto 1fr auto/304px 1fr}
  plane-model{grid-area:1/1/-1/-1}
  browser-panel{grid-area:1/1;margin:4px 0 0 4px}
  .comments{grid-area:3/1;margin:0 0 3px 4px}
  view-bar{grid-area:3/2;justify-self:center;align-self:end;margin:0 27px 4px 0}
  .task{height:3px;flex:none;background:linear-gradient(90deg,#1e1e1e 48px,#e4e4e4 48px 336px,#1e1e1e 336px 681px,#555 681px 729px,#1e1e1e 729px)}
  </style><ribbon-bar></ribbon-bar><main><plane-model></plane-model><browser-panel></browser-panel><panel-bar class="comments" docked>COMMENTS</panel-bar><view-bar></view-bar></main><time-line></time-line><div class="task"></div>`);
</script>
</body>
</html>
